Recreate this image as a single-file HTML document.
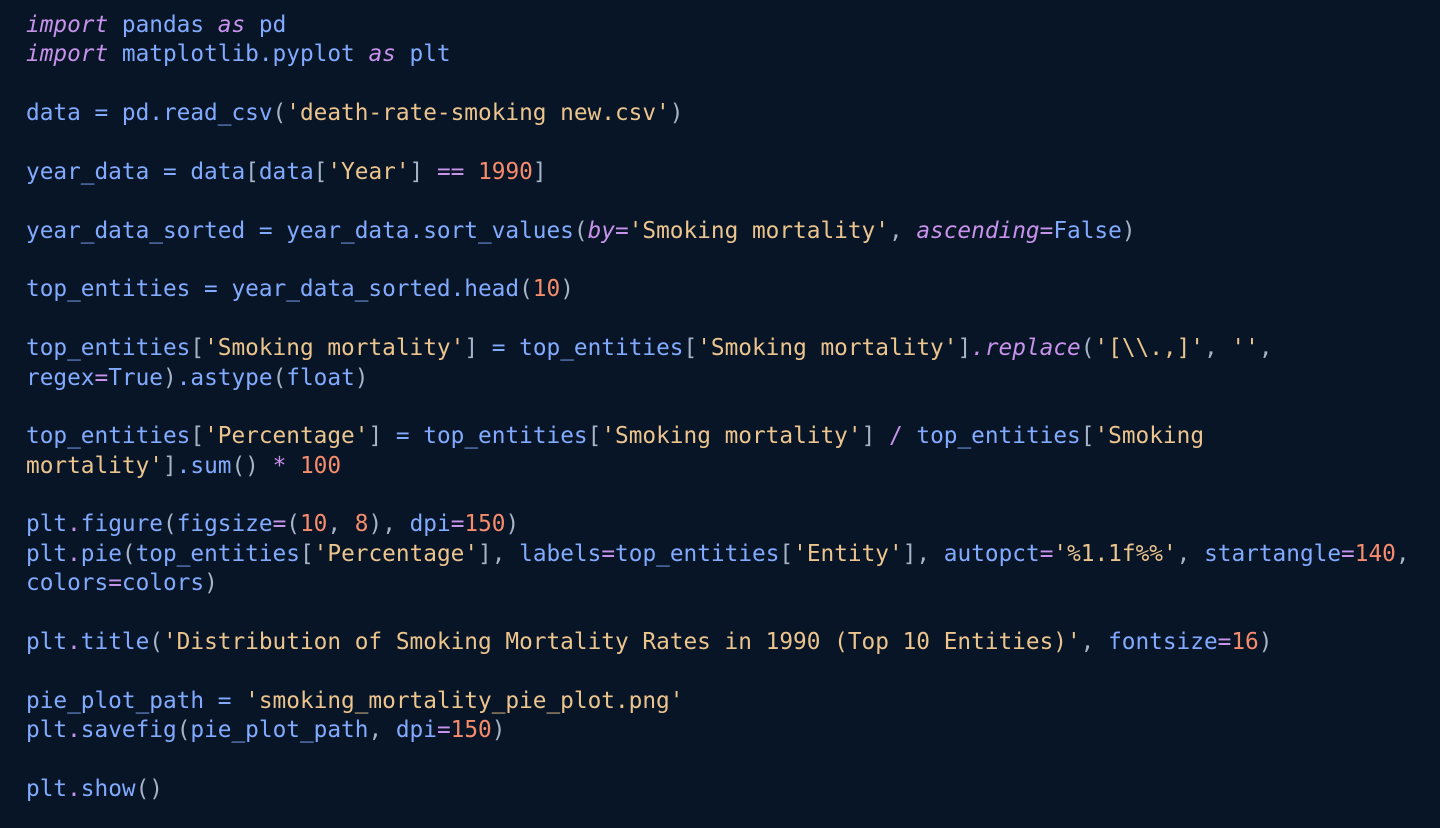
<!DOCTYPE html>
<html><head><meta charset="utf-8"><style>
html,body{margin:0;padding:0;background:#071527;width:1440px;height:828px;overflow:hidden}
pre{margin:0;padding:11px 0 0 26px;font-family:"DejaVu Sans Mono","Liberation Mono",monospace;font-size:22.75px;line-height:29.38px;color:#82aaff;white-space:pre}
.k{color:#c792ea;font-style:italic}
.o{color:#c792ea}
.s{color:#ecc48d}
.n{color:#f78c6c}
.p{color:#a6b3c8}
.f{color:#c792ea;font-style:italic}
</style></head><body><pre><span class="k">import</span> pandas <span class="k">as</span> pd
<span class="k">import</span> matplotlib.pyplot <span class="k">as</span> plt

data = pd.read_csv<span class="p">(</span><span class="s">'death-rate-smoking new.csv'</span><span class="p">)</span>

year_data = data<span class="p">[</span>data<span class="p">[</span><span class="s">'Year'</span><span class="p">]</span> <span class="k">==</span> <span class="n">1990</span><span class="p">]</span>

year_data_sorted = year_data.sort_values<span class="p">(</span><span class="k">by</span><span class="o">=</span><span class="s">'Smoking mortality'</span><span class="p">,</span> <span class="k">ascending</span><span class="o">=</span>False<span class="p">)</span>

top_entities = year_data_sorted.head<span class="p">(</span><span class="n">10</span><span class="p">)</span>

top_entities<span class="p">[</span><span class="s">'Smoking mortality'</span><span class="p">]</span> = top_entities<span class="p">[</span><span class="s">'Smoking mortality'</span><span class="p">]</span><span class="f">.replace</span><span class="p">(</span><span class="s">'[\\.,]'</span><span class="p">,</span> <span class="s">''</span><span class="p">,</span>
regex<span class="o">=</span>True<span class="p">)</span>.astype<span class="p">(</span>float<span class="p">)</span>

top_entities<span class="p">[</span><span class="s">'Percentage'</span><span class="p">]</span> = top_entities<span class="p">[</span><span class="s">'Smoking mortality'</span><span class="p">]</span> <span class="o">/</span> top_entities<span class="p">[</span><span class="s">'Smoking
mortality'</span><span class="p">]</span>.sum<span class="p">()</span> <span class="k">*</span> <span class="n">100</span>

plt<span class="o">.</span>figure<span class="p">(</span>figsize<span class="o">=</span><span class="p">(</span><span class="n">10</span><span class="p">,</span> <span class="n">8</span><span class="p">),</span> dpi<span class="o">=</span><span class="n">150</span><span class="p">)</span>
plt<span class="o">.</span>pie<span class="p">(</span>top_entities<span class="p">[</span><span class="s">'Percentage'</span><span class="p">],</span> labels<span class="o">=</span>top_entities<span class="p">[</span><span class="s">'Entity'</span><span class="p">],</span> autopct<span class="o">=</span><span class="s">'%1.1f%%'</span><span class="p">,</span> startangle<span class="o">=</span><span class="n">140</span><span class="p">,</span>
colors<span class="o">=</span>colors<span class="p">)</span>

plt<span class="o">.</span>title<span class="p">(</span><span class="s">'Distribution of Smoking Mortality Rates in 1990 (Top 10 Entities)'</span><span class="p">,</span> fontsize<span class="o">=</span><span class="n">16</span><span class="p">)</span>

pie_plot_path = <span class="s">'smoking_mortality_pie_plot.png'</span>
plt<span class="o">.</span>savefig<span class="p">(</span>pie_plot_path<span class="p">,</span> dpi<span class="o">=</span><span class="n">150</span><span class="p">)</span>

plt<span class="o">.</span>show<span class="p">()</span>
</pre></body></html>
